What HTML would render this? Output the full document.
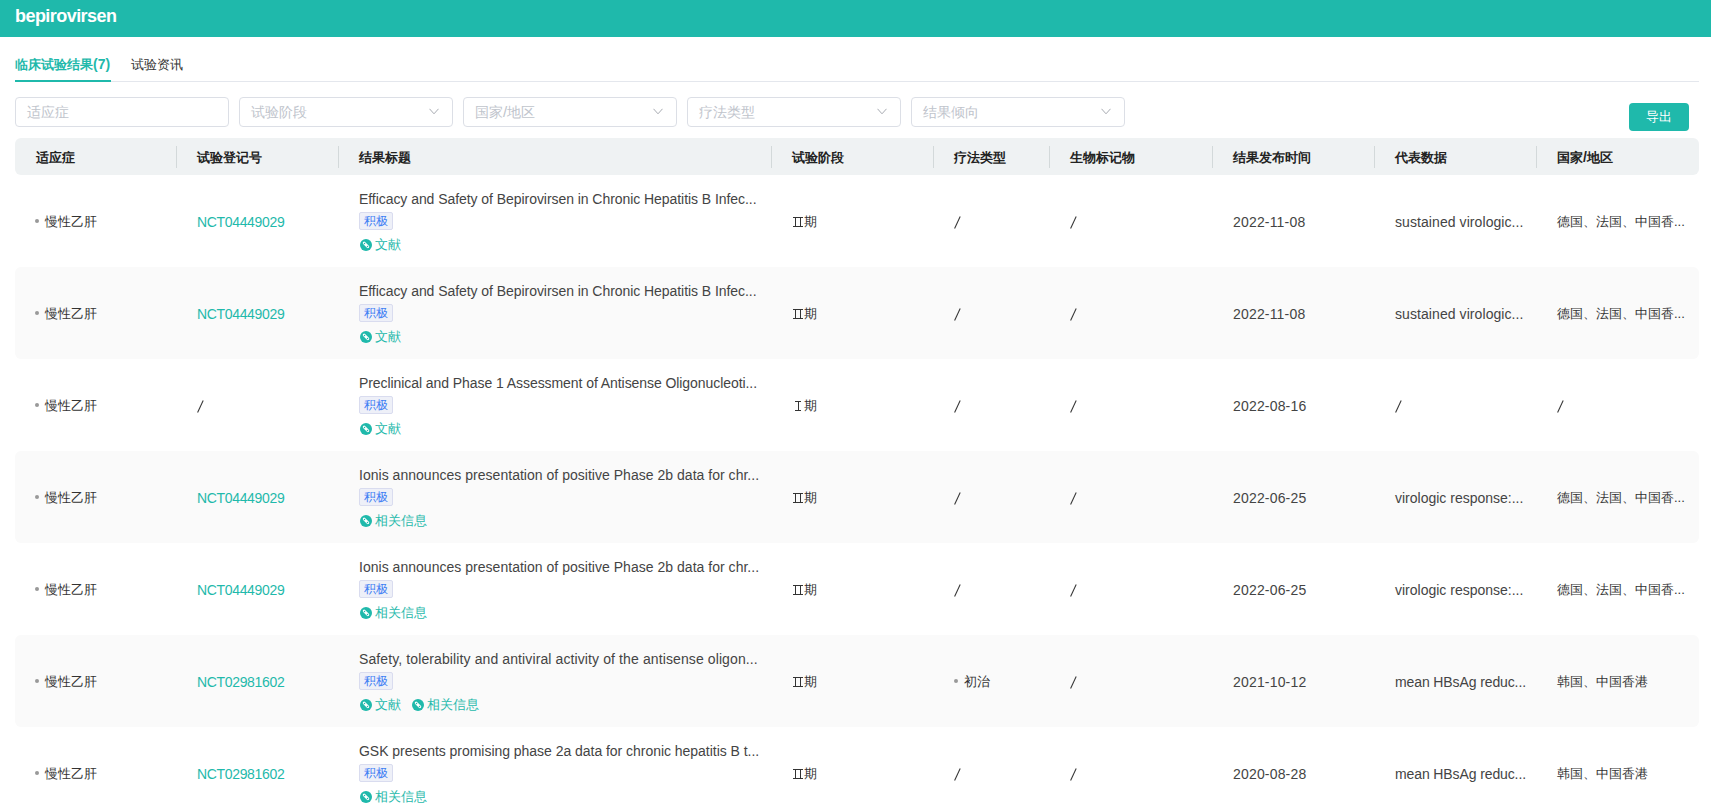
<!DOCTYPE html>
<html><head><meta charset="utf-8">
<style>
*{box-sizing:border-box;margin:0;padding:0}
html,body{width:1711px;height:806px;overflow:hidden;background:#fff}
body{font-family:"Liberation Sans",sans-serif;color:#333;position:relative}
.hdr{position:absolute;left:0;top:0;width:1711px;height:37px;background:#1fb9ab}
.hdr span{position:absolute;left:15px;top:6px;font-size:18px;letter-spacing:-0.55px;font-weight:bold;color:#fff;line-height:20px}
.tabs{position:absolute;left:15px;top:54px;width:1684px;height:28px;border-bottom:1px solid #e4e7ed}
.tab{position:absolute;top:0;font-size:13px;line-height:20px;color:#333}
.tab.on{left:0;color:#1fb9ab;width:96px;font-weight:bold}
.tab.on:after{content:"";position:absolute;left:0;top:26px;width:96px;height:2px;background:#1fb9ab}
.tab.t2{left:116px;top:1px}
.sel{position:absolute;top:97px;width:214px;height:30px;border:1px solid #dcdfe6;border-radius:4px;font-size:14px;color:#c0c4cc;line-height:28px;padding-left:11px}
.sel svg{position:absolute;right:13px;top:10px}
.btn{position:absolute;left:1629px;top:103px;width:60px;height:28px;background:#1fb9ab;border-radius:4px;color:#fff;font-size:13px;line-height:28px;text-align:center}
.th{position:absolute;left:15px;top:138px;width:1684px;height:37px;background:#eff2f3;border-radius:6px}
.th div{position:absolute;top:1px;height:37px;line-height:37px;font-size:13px;font-weight:bold;color:#222}
.th i{position:absolute;top:8px;width:1px;height:22px;background:#d3d9da}
.row{position:absolute;left:15px;width:1684px;height:92px}
.row.s{background:#fafafa;border-radius:6px}
.c{position:absolute;top:1px;height:92px;line-height:92px;font-size:13px;color:#333;white-space:nowrap}
.dot{display:inline-block;width:4px;height:4px;border-radius:50%;background:#999;vertical-align:middle;margin-left:-1px;margin-right:6px;position:relative;top:-2px}
.nct{color:#1fb9ab;position:relative;left:-1px}
.c3{position:absolute;top:0;left:344px;width:398px;height:92px;padding-top:14px}
.ttl{font-size:14px;line-height:20px;color:#333;white-space:nowrap}
.tag{display:inline-block;margin-top:3px;height:18px;line-height:17px;padding:0 4px;font-size:12px;color:#3f7ef4;background:#eef0f8;border:1px solid #d9dcef;border-radius:2px;vertical-align:top}
.lk{margin-top:5px;height:20px;line-height:20px;font-size:13px;color:#1fb9ab;white-space:nowrap}
.lk span{display:inline-block;margin-right:10px}
.ic{display:inline-block;width:12px;height:12px;border-radius:50%;background:#1fb9ab;vertical-align:middle;position:relative;top:-1px;margin-left:1px;margin-right:3px}
.en{font-size:14px;color:#444}
.nct.en{color:#1fb9ab}
.sl{position:absolute;left:0;top:40px}
.rn{position:absolute;left:0;top:40px}
.ic svg{position:absolute;left:0;top:0}
</style></head><body>
<div class="hdr"><span>bepirovirsen</span></div>
<div class="tabs"><div class="tab on">临床试验结果<span style="font-size:14px">(7)</span></div><div class="tab t2">试验资讯</div></div>

<div class="sel" style="left:15px">适应症</div>
<div class="sel" style="left:239px">试验阶段<svg width="10" height="7" viewBox="0 0 10 7"><path d="M0.5 0.8 L5 5.8 L9.5 0.8" fill="none" stroke="#a8abb2" stroke-width="1"/></svg></div>
<div class="sel" style="left:463px">国家<span style="font-size:15px">/</span>地区<svg width="10" height="7" viewBox="0 0 10 7"><path d="M0.5 0.8 L5 5.8 L9.5 0.8" fill="none" stroke="#a8abb2" stroke-width="1"/></svg></div>
<div class="sel" style="left:687px">疗法类型<svg width="10" height="7" viewBox="0 0 10 7"><path d="M0.5 0.8 L5 5.8 L9.5 0.8" fill="none" stroke="#a8abb2" stroke-width="1"/></svg></div>
<div class="sel" style="left:911px">结果倾向<svg width="10" height="7" viewBox="0 0 10 7"><path d="M0.5 0.8 L5 5.8 L9.5 0.8" fill="none" stroke="#a8abb2" stroke-width="1"/></svg></div>
<div class="btn">导出</div>

<div class="th">
<div style="left:21px">适应症</div>
<i style="left:161px"></i><div style="left:182px">试验登记号</div>
<i style="left:323px"></i><div style="left:344px">结果标题</div>
<i style="left:756px"></i><div style="left:777px">试验阶段</div>
<i style="left:918px"></i><div style="left:939px">疗法类型</div>
<i style="left:1034px"></i><div style="left:1055px">生物标记物</div>
<i style="left:1197px"></i><div style="left:1218px">结果发布时间</div>
<i style="left:1359px"></i><div style="left:1380px">代表数据</div>
<i style="left:1521px"></i><div style="left:1542px">国家<span style="font-size:14px">/</span>地区</div>
</div>

<!--ROWS-->
<div class="row" style="top:175px">
<div class="c" style="left:21px;width:140px"><i class="dot"></i>慢性乙肝</div>
<div class="c" style="left:183px;width:140px"><span class="nct en" style="letter-spacing:-0.340px">NCT04449029</span></div>
<div class="c3"><div class="ttl"><span class="en" style="letter-spacing:-0.056px">Efficacy and Safety of Bepirovirsen in Chronic Hepatitis B Infec...</span></div><span class="tag">积极</span><div class="lk"><span><i class="ic"><svg width="12" height="12" viewBox="0 0 12 12"><path d="M4.1 4 L7.9 7.8" stroke="#fff" stroke-width="2.7" stroke-linecap="round"/><circle cx="4.5" cy="4.4" r="0.75" fill="#1fb9ab"/><circle cx="7.5" cy="7.4" r="0.75" fill="#1fb9ab"/></svg></i>文献</span></div></div>
<div class="c" style="left:777px;width:140px"><svg class="rn" width="12" height="12" viewBox="0 0 12 12"><path d="M1 1.5H11M1 10.5H11M3.5 1.5V10.5M8.5 1.5V10.5" stroke="#333" stroke-width="1" fill="none"/></svg><span style="padding-left:12px">期</span></div>
<div class="c" style="left:939px;width:100px"><svg class="sl" width="7" height="13" viewBox="0 0 7 13"><path d="M0.6 12.4 L6.2 0.6" stroke="#333" stroke-width="1.05"/></svg></div>
<div class="c" style="left:1055px;width:140px"><svg class="sl" width="7" height="13" viewBox="0 0 7 13"><path d="M0.6 12.4 L6.2 0.6" stroke="#333" stroke-width="1.05"/></svg></div>
<div class="c" style="left:1218px;width:140px"><span class="en" style="letter-spacing:0.178px">2022-11-08</span></div>
<div class="c" style="left:1380px;width:135px"><span class="en" style="letter-spacing:0.076px">sustained virologic...</span></div>
<div class="c" style="left:1542px;width:135px">德国、法国、中国香...</div>
</div>
<div class="row s" style="top:267px">
<div class="c" style="left:21px;width:140px"><i class="dot"></i>慢性乙肝</div>
<div class="c" style="left:183px;width:140px"><span class="nct en" style="letter-spacing:-0.340px">NCT04449029</span></div>
<div class="c3"><div class="ttl"><span class="en" style="letter-spacing:-0.056px">Efficacy and Safety of Bepirovirsen in Chronic Hepatitis B Infec...</span></div><span class="tag">积极</span><div class="lk"><span><i class="ic"><svg width="12" height="12" viewBox="0 0 12 12"><path d="M4.1 4 L7.9 7.8" stroke="#fff" stroke-width="2.7" stroke-linecap="round"/><circle cx="4.5" cy="4.4" r="0.75" fill="#1fb9ab"/><circle cx="7.5" cy="7.4" r="0.75" fill="#1fb9ab"/></svg></i>文献</span></div></div>
<div class="c" style="left:777px;width:140px"><svg class="rn" width="12" height="12" viewBox="0 0 12 12"><path d="M1 1.5H11M1 10.5H11M3.5 1.5V10.5M8.5 1.5V10.5" stroke="#333" stroke-width="1" fill="none"/></svg><span style="padding-left:12px">期</span></div>
<div class="c" style="left:939px;width:100px"><svg class="sl" width="7" height="13" viewBox="0 0 7 13"><path d="M0.6 12.4 L6.2 0.6" stroke="#333" stroke-width="1.05"/></svg></div>
<div class="c" style="left:1055px;width:140px"><svg class="sl" width="7" height="13" viewBox="0 0 7 13"><path d="M0.6 12.4 L6.2 0.6" stroke="#333" stroke-width="1.05"/></svg></div>
<div class="c" style="left:1218px;width:140px"><span class="en" style="letter-spacing:0.178px">2022-11-08</span></div>
<div class="c" style="left:1380px;width:135px"><span class="en" style="letter-spacing:0.076px">sustained virologic...</span></div>
<div class="c" style="left:1542px;width:135px">德国、法国、中国香...</div>
</div>
<div class="row" style="top:359px">
<div class="c" style="left:21px;width:140px"><i class="dot"></i>慢性乙肝</div>
<div class="c" style="left:183px;width:140px"><svg class="sl" style="left:-1px" width="7" height="13" viewBox="0 0 7 13"><path d="M0.6 12.4 L6.2 0.6" stroke="#333" stroke-width="1.05"/></svg></div>
<div class="c3"><div class="ttl"><span class="en" style="letter-spacing:-0.068px">Preclinical and Phase 1 Assessment of Antisense Oligonucleoti...</span></div><span class="tag">积极</span><div class="lk"><span><i class="ic"><svg width="12" height="12" viewBox="0 0 12 12"><path d="M4.1 4 L7.9 7.8" stroke="#fff" stroke-width="2.7" stroke-linecap="round"/><circle cx="4.5" cy="4.4" r="0.75" fill="#1fb9ab"/><circle cx="7.5" cy="7.4" r="0.75" fill="#1fb9ab"/></svg></i>文献</span></div></div>
<div class="c" style="left:777px;width:140px"><svg class="rn" width="12" height="12" viewBox="0 0 12 12"><path d="M3 1.5H9M3 10.5H9M6.5 1.5V10.5" stroke="#333" stroke-width="1" fill="none"/></svg><span style="padding-left:12px">期</span></div>
<div class="c" style="left:939px;width:100px"><svg class="sl" width="7" height="13" viewBox="0 0 7 13"><path d="M0.6 12.4 L6.2 0.6" stroke="#333" stroke-width="1.05"/></svg></div>
<div class="c" style="left:1055px;width:140px"><svg class="sl" width="7" height="13" viewBox="0 0 7 13"><path d="M0.6 12.4 L6.2 0.6" stroke="#333" stroke-width="1.05"/></svg></div>
<div class="c" style="left:1218px;width:140px"><span class="en" style="letter-spacing:0.178px">2022-08-16</span></div>
<div class="c" style="left:1380px;width:135px"><svg class="sl" width="7" height="13" viewBox="0 0 7 13"><path d="M0.6 12.4 L6.2 0.6" stroke="#333" stroke-width="1.05"/></svg></div>
<div class="c" style="left:1542px;width:135px"><svg class="sl" width="7" height="13" viewBox="0 0 7 13"><path d="M0.6 12.4 L6.2 0.6" stroke="#333" stroke-width="1.05"/></svg></div>
</div>
<div class="row s" style="top:451px">
<div class="c" style="left:21px;width:140px"><i class="dot"></i>慢性乙肝</div>
<div class="c" style="left:183px;width:140px"><span class="nct en" style="letter-spacing:-0.340px">NCT04449029</span></div>
<div class="c3"><div class="ttl"><span class="en" style="letter-spacing:0.025px">Ionis announces presentation of positive Phase 2b data for chr...</span></div><span class="tag">积极</span><div class="lk"><span><i class="ic"><svg width="12" height="12" viewBox="0 0 12 12"><path d="M4.1 4 L7.9 7.8" stroke="#fff" stroke-width="2.7" stroke-linecap="round"/><circle cx="4.5" cy="4.4" r="0.75" fill="#1fb9ab"/><circle cx="7.5" cy="7.4" r="0.75" fill="#1fb9ab"/></svg></i>相关信息</span></div></div>
<div class="c" style="left:777px;width:140px"><svg class="rn" width="12" height="12" viewBox="0 0 12 12"><path d="M1 1.5H11M1 10.5H11M3.5 1.5V10.5M8.5 1.5V10.5" stroke="#333" stroke-width="1" fill="none"/></svg><span style="padding-left:12px">期</span></div>
<div class="c" style="left:939px;width:100px"><svg class="sl" width="7" height="13" viewBox="0 0 7 13"><path d="M0.6 12.4 L6.2 0.6" stroke="#333" stroke-width="1.05"/></svg></div>
<div class="c" style="left:1055px;width:140px"><svg class="sl" width="7" height="13" viewBox="0 0 7 13"><path d="M0.6 12.4 L6.2 0.6" stroke="#333" stroke-width="1.05"/></svg></div>
<div class="c" style="left:1218px;width:140px"><span class="en" style="letter-spacing:0.178px">2022-06-25</span></div>
<div class="c" style="left:1380px;width:135px"><span class="en" style="letter-spacing:0.000px">virologic response:...</span></div>
<div class="c" style="left:1542px;width:135px">德国、法国、中国香...</div>
</div>
<div class="row" style="top:543px">
<div class="c" style="left:21px;width:140px"><i class="dot"></i>慢性乙肝</div>
<div class="c" style="left:183px;width:140px"><span class="nct en" style="letter-spacing:-0.340px">NCT04449029</span></div>
<div class="c3"><div class="ttl"><span class="en" style="letter-spacing:0.025px">Ionis announces presentation of positive Phase 2b data for chr...</span></div><span class="tag">积极</span><div class="lk"><span><i class="ic"><svg width="12" height="12" viewBox="0 0 12 12"><path d="M4.1 4 L7.9 7.8" stroke="#fff" stroke-width="2.7" stroke-linecap="round"/><circle cx="4.5" cy="4.4" r="0.75" fill="#1fb9ab"/><circle cx="7.5" cy="7.4" r="0.75" fill="#1fb9ab"/></svg></i>相关信息</span></div></div>
<div class="c" style="left:777px;width:140px"><svg class="rn" width="12" height="12" viewBox="0 0 12 12"><path d="M1 1.5H11M1 10.5H11M3.5 1.5V10.5M8.5 1.5V10.5" stroke="#333" stroke-width="1" fill="none"/></svg><span style="padding-left:12px">期</span></div>
<div class="c" style="left:939px;width:100px"><svg class="sl" width="7" height="13" viewBox="0 0 7 13"><path d="M0.6 12.4 L6.2 0.6" stroke="#333" stroke-width="1.05"/></svg></div>
<div class="c" style="left:1055px;width:140px"><svg class="sl" width="7" height="13" viewBox="0 0 7 13"><path d="M0.6 12.4 L6.2 0.6" stroke="#333" stroke-width="1.05"/></svg></div>
<div class="c" style="left:1218px;width:140px"><span class="en" style="letter-spacing:0.178px">2022-06-25</span></div>
<div class="c" style="left:1380px;width:135px"><span class="en" style="letter-spacing:0.000px">virologic response:...</span></div>
<div class="c" style="left:1542px;width:135px">德国、法国、中国香...</div>
</div>
<div class="row s" style="top:635px">
<div class="c" style="left:21px;width:140px"><i class="dot"></i>慢性乙肝</div>
<div class="c" style="left:183px;width:140px"><span class="nct en" style="letter-spacing:-0.340px">NCT02981602</span></div>
<div class="c3"><div class="ttl"><span class="en" style="letter-spacing:0.109px">Safety, tolerability and antiviral activity of the antisense oligon...</span></div><span class="tag">积极</span><div class="lk"><span><i class="ic"><svg width="12" height="12" viewBox="0 0 12 12"><path d="M4.1 4 L7.9 7.8" stroke="#fff" stroke-width="2.7" stroke-linecap="round"/><circle cx="4.5" cy="4.4" r="0.75" fill="#1fb9ab"/><circle cx="7.5" cy="7.4" r="0.75" fill="#1fb9ab"/></svg></i>文献</span><span><i class="ic"><svg width="12" height="12" viewBox="0 0 12 12"><path d="M4.1 4 L7.9 7.8" stroke="#fff" stroke-width="2.7" stroke-linecap="round"/><circle cx="4.5" cy="4.4" r="0.75" fill="#1fb9ab"/><circle cx="7.5" cy="7.4" r="0.75" fill="#1fb9ab"/></svg></i>相关信息</span></div></div>
<div class="c" style="left:777px;width:140px"><svg class="rn" width="12" height="12" viewBox="0 0 12 12"><path d="M1 1.5H11M1 10.5H11M3.5 1.5V10.5M8.5 1.5V10.5" stroke="#333" stroke-width="1" fill="none"/></svg><span style="padding-left:12px">期</span></div>
<div class="c" style="left:939px;width:100px"><i class="dot" style="margin-left:0"></i>初治</div>
<div class="c" style="left:1055px;width:140px"><svg class="sl" width="7" height="13" viewBox="0 0 7 13"><path d="M0.6 12.4 L6.2 0.6" stroke="#333" stroke-width="1.05"/></svg></div>
<div class="c" style="left:1218px;width:140px"><span class="en" style="letter-spacing:0.178px">2021-10-12</span></div>
<div class="c" style="left:1380px;width:135px"><span class="en" style="letter-spacing:-0.111px">mean HBsAg reduc...</span></div>
<div class="c" style="left:1542px;width:135px">韩国、中国香港</div>
</div>
<div class="row" style="top:727px">
<div class="c" style="left:21px;width:140px"><i class="dot"></i>慢性乙肝</div>
<div class="c" style="left:183px;width:140px"><span class="nct en" style="letter-spacing:-0.340px">NCT02981602</span></div>
<div class="c3"><div class="ttl"><span class="en" style="letter-spacing:-0.034px">GSK presents promising phase 2a data for chronic hepatitis B t...</span></div><span class="tag">积极</span><div class="lk"><span><i class="ic"><svg width="12" height="12" viewBox="0 0 12 12"><path d="M4.1 4 L7.9 7.8" stroke="#fff" stroke-width="2.7" stroke-linecap="round"/><circle cx="4.5" cy="4.4" r="0.75" fill="#1fb9ab"/><circle cx="7.5" cy="7.4" r="0.75" fill="#1fb9ab"/></svg></i>相关信息</span></div></div>
<div class="c" style="left:777px;width:140px"><svg class="rn" width="12" height="12" viewBox="0 0 12 12"><path d="M1 1.5H11M1 10.5H11M3.5 1.5V10.5M8.5 1.5V10.5" stroke="#333" stroke-width="1" fill="none"/></svg><span style="padding-left:12px">期</span></div>
<div class="c" style="left:939px;width:100px"><svg class="sl" width="7" height="13" viewBox="0 0 7 13"><path d="M0.6 12.4 L6.2 0.6" stroke="#333" stroke-width="1.05"/></svg></div>
<div class="c" style="left:1055px;width:140px"><svg class="sl" width="7" height="13" viewBox="0 0 7 13"><path d="M0.6 12.4 L6.2 0.6" stroke="#333" stroke-width="1.05"/></svg></div>
<div class="c" style="left:1218px;width:140px"><span class="en" style="letter-spacing:0.178px">2020-08-28</span></div>
<div class="c" style="left:1380px;width:135px"><span class="en" style="letter-spacing:-0.111px">mean HBsAg reduc...</span></div>
<div class="c" style="left:1542px;width:135px">韩国、中国香港</div>
</div>
</body></html>
